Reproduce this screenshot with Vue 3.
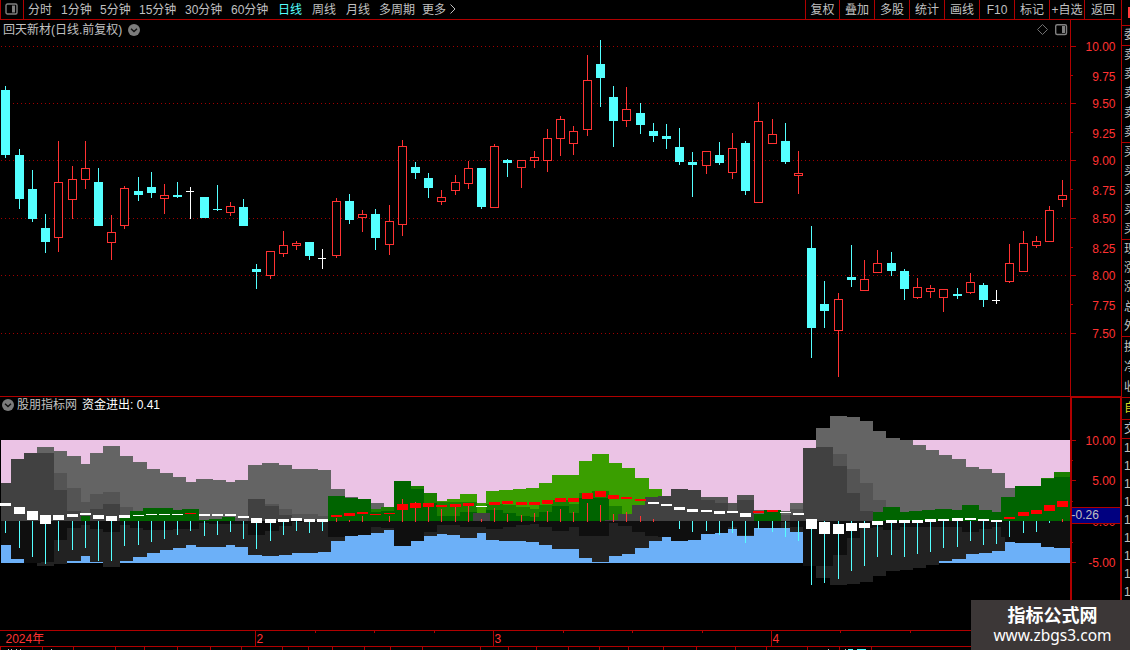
<template>
    <div class="terminal">
        <header class="toolbar">
            <div class="layout-btn">
                <svg width="13" height="12" viewBox="0 0 13 12">
                    <rect x="1" y="1" width="11" height="10" rx="1.5" fill="none" stroke="#808080" stroke-width="1.4" />
                    <rect x="7" y="2.5" width="3" height="7" fill="#808080" />
                </svg>
            </div>
            <nav class="periods">
                <span v-for="period in periods" :key="period" :class="{ active: period === '日线' }">{{ period }}</span>
                <svg class="more" width="6" height="10" viewBox="0 0 6 10">
                    <path d="M0.5 0.5 L5 5 L0.5 9.5" fill="none" stroke="#c0c0c0" />
                </svg>
            </nav>
            <div class="actions">
                <span v-for="action in actions" :key="action">{{ action }}</span>
            </div>
        </header>
        <div class="flag"></div>

        <div class="body">
            <main class="charts">
                <section class="panel">
                    <div class="panel-title">
                        <span class="stock">回天新材(日线.前复权)</span>
                        <svg class="toggle" width="12" height="12" viewBox="0 0 12 12">
                            <circle cx="6" cy="6" r="6" fill="#7c7c7c" />
                            <path d="M3 4.8 L6 7.6 L9 4.8" fill="none" stroke="#111" stroke-width="1.4" />
                        </svg>
                    </div>
                    <svg class="plot" width="1121" height="377" viewBox="0 20 1121 377">
                        <line v-for="y in gridLines" :key="'g' + y" x1="1" x2="1068" :y1="y + 0.5" :y2="y + 0.5" class="grid" />
                        <g v-for="c in candles" :key="c.x" :class="c.type">
                            <rect :x="c.x" :y="c.high" width="1" :height="Math.max(c.top - c.high, 0)" />
                            <rect :x="c.x" :y="c.bottom" width="1" :height="Math.max(c.low - c.bottom, 0)" />
                            <rect v-if="c.type === 'up'" :x="c.x - 3.5" :y="c.top + 0.5" width="8" :height="c.bottom - c.top - 1" class="hollow" />
                            <rect v-else :x="c.x - 4" :y="c.top" :width="c.type === 'flat' ? 8 : 9" :height="c.bottom - c.top" />
                        </g>
                        <rect x="1070" y="20" width="1" height="377" class="axis" />
                        <rect x="0" y="396" width="1121" height="1" class="axis" />
                        <g v-for="tick in priceTicks" :key="tick.label">
                            <rect x="1071" :y="tick.y" :width="tick.major ? 5 : 2" height="1" class="axis" />
                            <text x="1115.5" :y="tick.y + (tick.major ? 5 : 6)" class="label">{{ tick.label }}</text>
                        </g>
                        <path d="M1042.5 24.5 L1047.5 29.5 L1042.5 34.5 L1037.5 29.5 Z" class="diamond" />
                        <g class="panel-icon">
                            <rect x="1055.7" y="24.7" width="10.8" height="9.8" rx="1.5" fill="none" stroke="#808080" stroke-width="1.4" />
                            <rect x="1062" y="26" width="3" height="7" fill="#808080" />
                        </g>
                    </svg>
                </section>

                <section class="panel">
                    <div class="panel-title sub">
                        <svg class="toggle" width="12" height="12" viewBox="0 0 12 12">
                            <circle cx="6" cy="6" r="6" fill="#7c7c7c" />
                            <path d="M3 4.8 L6 7.6 L9 4.8" fill="none" stroke="#111" stroke-width="1.4" />
                        </svg>
                        <span class="name">股朋指标网</span>
                        <span class="value">资金进出: 0.41</span>
                    </div>
                    <svg class="plot" width="1122" height="233" viewBox="0 397 1122 233">
                        <rect x="1" y="440" width="1069" height="81" fill="#ebc3e5" />
                        <rect x="1" y="521" width="1069" height="42" fill="#6cb0f8" />
                        <path v-for="layer in layers" :key="layer.fill" :d="steps(layer.points)" :fill="layer.fill" />
                        <g v-for="(c, i) in candles" :key="c.x">
                            <rect
                                v-if="stems[i]"
                                :x="c.x"
                                :y="Math.min(stems[i], 521)"
                                width="1"
                                :height="stems[i] > 521 ? stems[i] - 521 : 522 - stems[i]"
                                :fill="stems[i] > 521 ? '#54ffff' : '#ff3232'"
                            />
                            <rect :x="c.x - 5" :y="bars[i][0]" width="11" :height="bars[i][1] - bars[i][0]" :fill="redBars.has(i) ? '#ff0000' : '#ffffff'" />
                        </g>
                        <rect x="1070" y="397" width="2" height="233" class="axis" />
                        <rect x="1120" y="397" width="2" height="233" class="axis" />
                        <rect x="1070" y="397" width="52" height="1" class="axis" />
                        <g v-for="tick in flowTicks" :key="tick.y">
                            <rect x="1072" :y="tick.y" :width="tick.label ? 4 : 1" height="1" class="axis" />
                            <text v-if="tick.label" x="1115.5" :y="tick.y + 5" class="label">{{ tick.label }}</text>
                        </g>
                        <rect x="1072" y="507" width="48" height="17" fill="#b00000" />
                        <rect x="1072" y="508" width="48" height="15" fill="#000080" />
                        <text x="1071.5" y="519" class="cursor-value">-0.26</text>
                    </svg>
                </section>

                <svg class="timeline" width="1121" height="20" viewBox="0 630 1121 20">
                    <rect x="0" y="630" width="1121" height="1" class="axis" />
                    <rect x="0" y="646" width="1121" height="1" class="axis" />
                    <rect v-for="x in weekTicks" :key="'w' + x" :x="x" y="631" width="1" height="2" class="axis" />
                    <rect v-for="x in tabTicks" :key="'t' + x" :x="x" y="647" width="1" height="3" class="axis" />
                    <g v-for="month in months" :key="month.label">
                        <rect v-if="month.x" :x="month.x" y="631" width="1" height="15" class="axis" />
                        <text :x="month.x ? month.x + 1.5 : 5.5" y="643" class="month">{{ month.label }}</text>
                    </g>
                    <rect v-for="x in [8, 11, 16, 20, 51, 828, 845]" :key="'p' + x" :x="x" y="649" width="1" height="1" fill="#c0c0c0" />
                    <rect x="848" y="649" width="5" height="1" fill="#54ffff" />
                    <rect x="857" y="649" width="9" height="1" fill="#54ffff" />
                </svg>
            </main>

            <aside class="quotes">
                <div v-for="group in quoteGroups" :key="group.name" class="group" :class="group.name">
                    <span v-for="(ch, i) in group.text" :key="i">{{ ch }}</span>
                </div>
            </aside>
        </div>

        <div class="watermark">
            <strong>指标公式网</strong>
            <span>www.zbgs3.com</span>
        </div>
    </div>
</template>

<script setup>
const periods = ['分时', '1分钟', '5分钟', '15分钟', '30分钟', '60分钟', '日线', '周线', '月线', '多周期', '更多'];
const actions = ['复权', '叠加', '多股', '统计', '画线', 'F10', '标记', '+自选', '返回'];

const gridLines = [46, 103, 160, 218, 275, 333];

const priceTicks = [46, 75, 103, 132, 160, 189, 218, 247, 275, 304, 333].map((y, i) => ({
    y,
    label: (10 - i * 0.25).toFixed(2),
    major: i % 2 === 0
}));

const flowTicks = [
    { y: 440, label: '10.00' },
    { y: 460 },
    { y: 480, label: '5.00' },
    { y: 501 },
    { y: 521, label: '0.00' },
    { y: 542 },
    { y: 562, label: '-5.00' }
];

const months = [
    { x: 0, label: '2024年' },
    { x: 255, label: '2' },
    { x: 493, label: '3' },
    { x: 771, label: '4' }
];
const weekTicks = [315, 374, 434, 563, 632, 702, 840, 910];
const tabTicks = [
    0, 42, 73, 115, 144, 177, 210, 241, 282, 308, 332, 364, 390, 422, 480, 508, 536,
    568, 599, 628, 663, 696, 735, 766, 807, 839, 871
];

// x, high, body top, body bottom, low
const candles = [
    [5, 86, 90, 155, 158, 'down'], [19, 149, 155, 199, 209, 'down'], [32, 170, 189, 219, 222, 'down'],
    [45, 214, 228, 242, 253, 'down'], [58, 141, 182, 238, 252, 'up'], [72, 166, 179, 200, 219, 'up'],
    [85, 141, 168, 180, 189, 'up'], [98, 168, 182, 226, 226, 'down'], [111, 215, 232, 243, 260, 'up'],
    [124, 186, 188, 226, 229, 'up'], [138, 177, 191, 195, 201, 'down'], [151, 172, 187, 193, 198, 'down'],
    [164, 184, 195, 199, 214, 'up'], [177, 182, 195, 197, 198, 'down'], [190, 187, 191, 192, 219, 'flat'],
    [204, 197, 197, 218, 218, 'down'], [217, 185, 209, 210, 211, 'down'], [230, 202, 206, 213, 216, 'up'],
    [243, 199, 207, 226, 226, 'down'], [256, 264, 269, 272, 289, 'down'], [270, 251, 251, 276, 279, 'up'],
    [283, 231, 245, 254, 257, 'up'], [296, 241, 243, 246, 250, 'up'], [309, 242, 242, 256, 260, 'down'],
    [322, 249, 258, 259, 269, 'flat'], [336, 198, 201, 256, 258, 'up'], [349, 194, 201, 220, 224, 'down'],
    [362, 210, 214, 218, 232, 'up'], [375, 209, 214, 238, 250, 'down'], [389, 205, 221, 245, 255, 'up'],
    [402, 140, 146, 225, 236, 'up'], [415, 162, 167, 173, 179, 'down'], [428, 173, 178, 188, 198, 'down'],
    [441, 190, 197, 202, 205, 'up'], [455, 175, 182, 191, 195, 'up'], [468, 161, 168, 184, 189, 'up'],
    [481, 168, 168, 207, 209, 'down'], [494, 144, 146, 208, 208, 'up'], [507, 159, 160, 163, 177, 'down'],
    [521, 160, 160, 168, 188, 'up'], [534, 151, 157, 161, 168, 'up'], [547, 129, 138, 161, 172, 'up'],
    [560, 116, 119, 139, 156, 'up'], [573, 126, 131, 144, 155, 'up'], [587, 55, 80, 130, 136, 'up'],
    [600, 40, 64, 78, 107, 'down'], [613, 86, 97, 121, 147, 'down'], [626, 87, 109, 121, 127, 'up'],
    [640, 103, 113, 125, 134, 'down'], [653, 123, 131, 136, 142, 'down'], [666, 124, 136, 139, 149, 'down'],
    [679, 128, 147, 162, 165, 'down'], [692, 152, 162, 165, 197, 'down'], [706, 151, 151, 166, 174, 'up'],
    [719, 142, 155, 163, 165, 'down'], [732, 133, 148, 173, 179, 'up'], [745, 141, 143, 191, 195, 'down'],
    [758, 102, 121, 203, 203, 'up'], [772, 119, 134, 144, 144, 'up'], [785, 123, 141, 162, 164, 'down'],
    [798, 151, 173, 176, 194, 'up'], [811, 226, 248, 328, 358, 'down'], [824, 281, 304, 311, 328, 'down'],
    [838, 293, 299, 331, 377, 'up'], [851, 245, 277, 280, 287, 'down'], [864, 260, 279, 291, 291, 'up'],
    [877, 250, 263, 273, 273, 'up'], [891, 252, 263, 271, 276, 'down'], [904, 269, 271, 289, 300, 'down'],
    [917, 278, 287, 298, 299, 'up'], [930, 285, 288, 292, 298, 'up'], [943, 289, 289, 298, 312, 'up'],
    [957, 288, 294, 296, 299, 'down'], [970, 273, 282, 293, 294, 'up'], [983, 283, 285, 300, 307, 'down'],
    [996, 290, 300, 301, 304, 'flat'], [1009, 244, 263, 282, 283, 'up'], [1023, 231, 243, 272, 272, 'up'],
    [1036, 236, 241, 246, 248, 'up'], [1049, 206, 210, 242, 242, 'up'], [1062, 180, 195, 200, 207, 'up']
].map(([x, high, top, bottom, low, type]) => ({ x, high, top, bottom, low, type }));

const BASE = 521;

// each point is where a step starts; y = BASE leaves a gap
const layers = [
    {
        fill: '#646464',
        points: [
            [37, 447], [54, 451], [67, 456], [81, 464], [90, 453], [103, 446], [120, 456], [133, 462], [147, 469],
            [160, 473], [173, 477], [186, 482], [196, 479], [213, 480], [226, 482], [235, 480], [248, 465],
            [262, 463], [279, 465], [292, 469], [318, 470], [331, 489], [345, 497], [358, 499], [371, 503], [384, 521],
            [754, 510], [764, 521], [781, 511], [790, 503], [803, 521],
            [816, 428], [830, 416], [847, 417], [860, 421], [873, 431], [886, 438], [900, 440], [913, 445],
            [926, 450], [939, 455], [952, 459], [966, 467], [979, 469], [992, 473], [1005, 488], [1015, 521]
        ]
    },
    {
        fill: '#545454',
        points: [
            [54, 473], [67, 488], [81, 502], [90, 494], [103, 492], [120, 507], [133, 521], [235, 518], [248, 499],
            [265, 504], [279, 509], [292, 514], [318, 516], [328, 521],
            [701, 497], [728, 503], [737, 495], [754, 521], [781, 515], [790, 509], [803, 521],
            [833, 454], [847, 469], [860, 483], [873, 500], [886, 512], [909, 521]
        ]
    },
    {
        fill: '#3a9e00',
        points: [
            [437, 501], [447, 499], [460, 494], [477, 503], [486, 491], [499, 490], [513, 489], [526, 488],
            [539, 483], [552, 475], [579, 461], [592, 454], [609, 463], [622, 468], [635, 478], [649, 489], [662, 521]
        ]
    },
    {
        fill: '#1a7e00',
        points: [
            [371, 509], [381, 507], [394, 481], [411, 486], [424, 493], [437, 502], [477, 521], [486, 504],
            [503, 505], [516, 507], [530, 509], [539, 505], [552, 500], [569, 504], [579, 493], [592, 491],
            [609, 506], [622, 521], [1041, 478], [1054, 472], [1070, 521]
        ]
    },
    {
        fill: '#006400',
        points: [
            [81, 516], [90, 521], [120, 518], [130, 511], [143, 508], [173, 510], [182, 509], [199, 520],
            [209, 519], [222, 517], [235, 521], [328, 496], [345, 498], [358, 499], [371, 512], [381, 511],
            [394, 481], [411, 489], [424, 503], [437, 516], [460, 512], [477, 521], [486, 510], [503, 513],
            [516, 516], [530, 517], [539, 512], [552, 506], [569, 513], [579, 498], [609, 521],
            [754, 514], [764, 510], [781, 521],
            [873, 512], [883, 507], [900, 512], [909, 511], [922, 510], [935, 509], [952, 510], [962, 505],
            [979, 510], [992, 512], [1001, 497], [1015, 486], [1041, 479], [1054, 477], [1070, 521]
        ]
    },
    {
        fill: '#414141',
        points: [
            [1, 483], [11, 459], [24, 453], [54, 490], [67, 511], [81, 521], [90, 509], [103, 504], [120, 521],
            [248, 499], [265, 506], [279, 515], [292, 519], [328, 521], [473, 513], [490, 521], [605, 520],
            [618, 514], [632, 505], [645, 497], [658, 496], [671, 489], [688, 490], [701, 500], [715, 503],
            [728, 511], [737, 500], [754, 521], [790, 515], [803, 448], [816, 447], [833, 466], [847, 493],
            [860, 511], [873, 521]
        ]
    },
    {
        fill: '#222222',
        points: [
            [37, 566], [54, 564], [67, 561], [81, 556], [90, 562], [103, 567], [120, 561], [133, 557], [147, 553],
            [160, 550], [173, 548], [186, 545], [196, 547], [226, 545], [235, 547], [248, 555], [262, 556],
            [279, 555], [292, 553], [318, 552], [331, 541], [345, 536], [358, 535], [371, 533], [384, 530],
            [394, 546], [411, 541], [424, 536], [437, 534], [447, 535], [460, 538], [477, 533], [486, 540],
            [499, 541], [526, 542], [539, 545], [552, 549], [579, 558], [592, 562], [609, 556], [622, 554],
            [635, 548], [649, 541], [662, 537], [671, 541], [688, 540], [701, 534], [715, 533], [728, 529],
            [737, 536], [754, 528], [790, 532], [803, 566], [816, 578], [830, 585], [847, 584], [860, 582],
            [873, 576], [886, 571], [900, 570], [913, 568], [926, 565], [939, 561], [952, 559], [966, 554],
            [979, 553], [992, 551], [1005, 537], [1015, 521]
        ]
    },
    {
        fill: '#0f0f0f',
        points: [
            [1, 545], [11, 559], [24, 563], [41, 562], [54, 540], [67, 528], [81, 525], [90, 529], [103, 532],
            [120, 525], [130, 528], [143, 530], [173, 529], [199, 523], [209, 524], [248, 535], [265, 531],
            [279, 526], [292, 522], [328, 537], [345, 536], [358, 535], [371, 527], [381, 528], [394, 546],
            [411, 541], [424, 532], [437, 525], [460, 527], [477, 527], [486, 529], [503, 527], [516, 525],
            [530, 524], [539, 527], [552, 531], [569, 527], [579, 536], [609, 523], [618, 526], [632, 532],
            [645, 536], [658, 537], [671, 541], [688, 540], [701, 534], [715, 533], [728, 527], [737, 535],
            [754, 528], [781, 522], [790, 527], [803, 566], [833, 555], [847, 538], [860, 528], [873, 527],
            [883, 530], [900, 527], [962, 532], [979, 529], [992, 527], [1001, 537], [1005, 542], [1015, 543],
            [1041, 547], [1054, 548], [1070, 521]
        ]
    }
];

const steps = (points) => {
    let d = `M${points[0][0]} ${BASE}`;
    points.forEach(([, y], i) => {
        d += ` V${y}`;
        if (points[i + 1]) d += ` H${points[i + 1][0]}`;
    });
    return `${d} V${BASE} Z`;
};

const bars = [
    [503, 506], [507, 514], [511, 520], [515, 524], [515, 520], [514, 517], [513, 515], [515, 519], [516, 521],
    [515, 518], [515, 516], [514, 515], [514, 515], [514, 515], [513, 514], [514, 516], [514, 516], [514, 516],
    [516, 518], [518, 523], [519, 523], [519, 522], [518, 521], [519, 522], [519, 522], [515, 517], [513, 516],
    [512, 514], [514, 515], [513, 514], [504, 510], [503, 508], [503, 507], [505, 507], [504, 507], [503, 506],
    [506, 507], [502, 505], [501, 504], [502, 505], [502, 505], [500, 504], [498, 502], [498, 502], [493, 499],
    [491, 497], [495, 499], [497, 499], [499, 501], [502, 504], [504, 506], [507, 510], [509, 512], [510, 512],
    [511, 514], [511, 513], [513, 517], [511, 513], [510, 512], [512, 513], [513, 515], [519, 529], [522, 534],
    [524, 534], [523, 531], [523, 528], [521, 525], [520, 523], [520, 523], [520, 523], [519, 522], [519, 521],
    [518, 521], [518, 520], [519, 521], [520, 522], [517, 519], [512, 516], [510, 514], [505, 511], [501, 507]
];

const redBars = new Set([
    14, 25, 26, 27, 28, 29, 30, 31, 32, 33, 34, 35, 37, 38, 39, 40, 41, 42, 43, 44, 45, 46, 47, 48, 57, 58,
    76, 77, 78, 79, 80
]);

const stems = [
    533, 548, 557, 564, 551, 550, 548, 561, 561, 546, 545, 542, 539, 535, 531, 536, 535, 532, 539,
    549, 541, 535, 531, 533, 531, 518, 520, 516, null, 516, 499, 502, 506, 509, 507, 506, 519, 508, 514,
    515, 513, 511, 509, 512, 503, 505, 514, 512, 516, 519, null, 529, 532, 531, 535, 533, 543, 529, 532,
    537, 541, 585, 583, 579, 571, 566, 557, 555, 557, 554, 552, 548, 547, 541, 545, 544, 537, 533, 532, 523, 519
];

const quoteGroups = [
    { name: 'head', text: '' },
    { name: 'ratio', text: '委' },
    { name: 'sell', text: '卖卖卖卖卖' },
    { name: 'buy', text: '买买买买买' },
    { name: 'stats', text: '现涨涨总外' },
    { name: 'extra', text: '换净收' },
    { name: 'own', text: '自' },
    { name: 'deal', text: '交' },
    { name: 'times', text: '111111111' }
];
</script>

<style>
body {
    background-color: #000;
}
</style>

<style scoped>
.terminal {
    position: relative;
    display: flex;
    flex-direction: column;
    width: 1130px;
    height: 650px;
    overflow: hidden;
    background-color: #000;
    color: #c0c0c0;
    font-family: "Liberation Sans", "Noto Sans CJK SC", sans-serif;
    font-size: 12px;
}

.toolbar {
    display: flex;
    flex: none;
    box-sizing: border-box;
    width: 1122px;
    height: 20px;
    border-left: 1px solid #b00000;
    border-bottom: 1px solid #b00000;
    border-right: 1px solid #b00000;
    line-height: 20px;
    white-space: nowrap;
}

.flag {
    position: absolute;
    top: 7px;
    right: 0;
    width: 2px;
    height: 11px;
    background-color: #ff3c3c;
}

.layout-btn {
    box-sizing: border-box;
    width: 23px;
    padding: 3px 0 0 4px;
    line-height: 0;
    border-right: 1px solid #b00000;
}

.periods {
    display: grid;
    grid-template-columns: 33px 39px 39px 46px 46px 47px 34px 34px 33px 43px 28px 8px;
    flex: 1;
    padding-left: 4px;
}

.periods .active {
    color: #54ffff;
}

.more {
    margin-top: 4px;
}

.actions {
    display: grid;
    grid-template-columns: 34px repeat(7, 35px) 37px;
}

.actions span {
    box-sizing: border-box;
    height: 19px;
    border-left: 1px solid #b00000;
    text-align: center;
}

.body {
    display: flex;
    flex: 1;
}

.charts {
    flex: none;
    display: flex;
    flex-direction: column;
    width: 1121px;
}

.panel {
    position: relative;
    line-height: 0;
}

.panel-title {
    position: absolute;
    top: 0;
    left: 3px;
    display: flex;
    align-items: center;
    gap: 6px;
    height: 19px;
    line-height: 18px;
    white-space: nowrap;
}

.panel-title.sub {
    top: -2px;
    left: 2px;
    gap: 4px;
}

.panel-title .name {
    margin-left: -1px;
    margin-right: 1px;
}

.panel-title .value {
    color: #fff;
}

.plot,
.timeline {
    display: block;
    overflow: visible;
    shape-rendering: crispEdges;
}

.grid {
    stroke: #a00000;
    stroke-dasharray: 1 3;
}

.axis {
    fill: #b00000;
}

.up {
    fill: #ff3232;
}

.hollow {
    fill: #000;
    stroke: #ff3232;
}

.down {
    fill: #54ffff;
}

.flat {
    fill: #fff;
}

.diamond {
    fill: none;
    stroke: #707070;
    shape-rendering: auto;
}

.panel-icon {
    shape-rendering: auto;
}

.label {
    fill: #ff3232;
    text-anchor: end;
    font-size: 12px;
}

.cursor-value {
    fill: #c0c0c0;
}

.month {
    fill: #ff3232;
}

.quotes {
    flex: none;
    box-sizing: border-box;
    width: 9px;
    overflow: hidden;
    border-left: 1px solid #b00000;
}

.group {
    display: flex;
    flex-direction: column;
    justify-content: space-around;
    box-sizing: border-box;
    width: 20px;
    padding-left: 2px;
    border-bottom: 1px solid #b00000;
    line-height: 17px;
}

.head {
    height: 6px;
}

.ratio {
    height: 20px;
}

.sell,
.buy,
.stats {
    height: 97px;
}

.extra {
    height: 61px;
}

.own {
    height: 22px;
    color: #d8d820;
}

.deal {
    height: 19px;
}

.times {
    height: 163px;
    border-bottom: none;
}

.watermark {
    position: absolute;
    right: 0;
    bottom: 0;
    display: flex;
    flex-direction: column;
    align-items: center;
    box-sizing: border-box;
    width: 159px;
    height: 50px;
    padding: 2px 0 0 4px;
    background-color: #3c3737;
    color: #fff;
}

.watermark strong {
    font-family: "Noto Sans CJK SC", sans-serif;
    font-size: 18px;
    line-height: 24px;
}

.watermark span {
    font-family: "Noto Sans", sans-serif;
    font-size: 15.5px;
    line-height: 18px;
}
</style>
